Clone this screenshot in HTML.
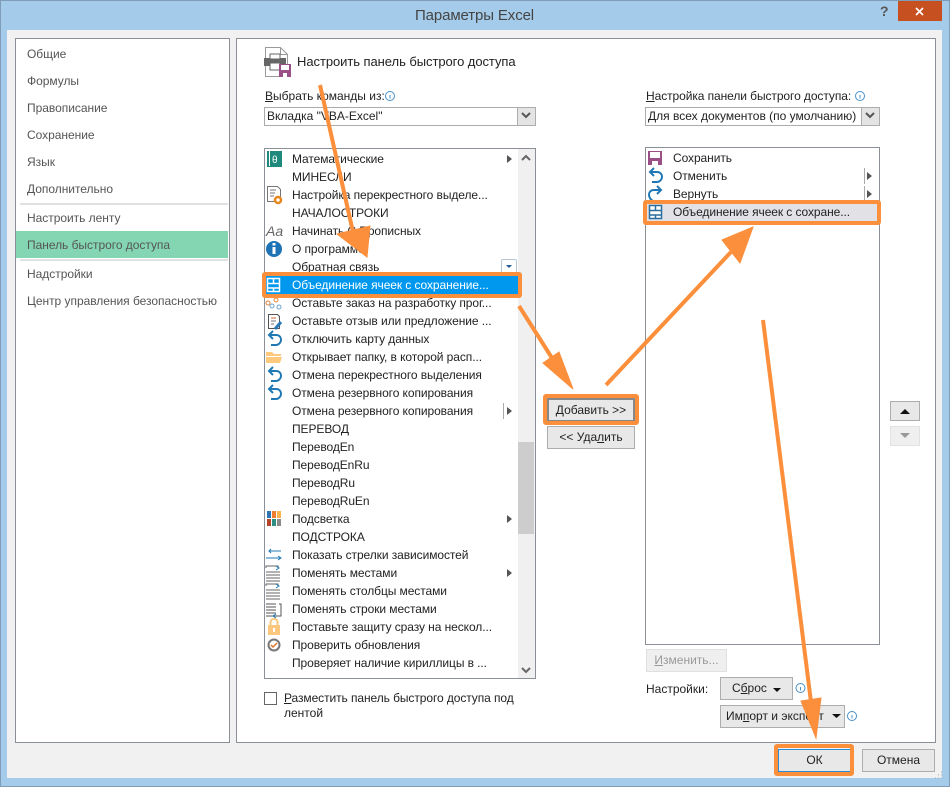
<!DOCTYPE html>
<html lang="ru"><head><meta charset="utf-8"><title>Параметры Excel</title>
<style>
html,body{margin:0;padding:0;background:#a5cbea}
#w{position:relative;width:950px;height:787px;overflow:hidden;background:#a5cbea;font:12px/18px "Liberation Sans",sans-serif;color:#222}
#w div{position:absolute;box-sizing:border-box}
.t{white-space:nowrap;height:18px}
.n{left:27px;color:#555;white-space:nowrap;height:18px;letter-spacing:-.03px}
.sep{left:20px;width:208px;height:2px;background:#e1e1e1}
.i{left:292px;letter-spacing:-.08px}
.r{left:673px;letter-spacing:-.08px}
.b{background:#e8e8e8;border:1px solid #adadad;text-align:center;white-space:nowrap}
.c{background:#fff;border:1px solid #ababab}
.d{background:#e4e4e4;border:1px solid #adadad}
u{text-underline-offset:1px}
svg{position:absolute;left:0;top:0}
</style></head><body><div id="w">
<div style="left:0;top:0;width:950px;height:787px;border:1px solid #7f9db9"></div>
<div style="left:7px;top:30px;width:935px;height:748px;background:#f1f1f1"></div>
<div style="left:15px;top:38px;width:215px;height:705px;background:#fff;border:1px solid #8b9097"></div>
<div style="left:236px;top:38px;width:700px;height:705px;background:#fff;border:1px solid #8b9097"></div>
<div class="t" style="left:415px;top:7px;font-size:15px;letter-spacing:-.12px;color:#444">Параметры Excel</div>
<div style="left:898px;top:1px;width:44px;height:20px;background:#c75020"></div>
<div class="t" style="left:880px;top:2px;font-size:14px;font-weight:bold;color:#555">?</div>

<div class="n" style="top:45px">Общие</div>
<div class="n" style="top:72px">Формулы</div>
<div class="n" style="top:99px">Правописание</div>
<div class="n" style="top:126px">Сохранение</div>
<div class="n" style="top:153px">Язык</div>
<div class="n" style="top:180px">Дополнительно</div>
<div class="sep" style="top:203px"></div>
<div class="n" style="top:209px">Настроить ленту</div>
<div style="left:16px;top:231px;width:212px;height:27px;background:#84d6b3"></div>
<div class="n" style="top:236px">Панель быстрого доступа</div>
<div class="sep" style="top:259px"></div>
<div class="n" style="top:265px">Надстройки</div>
<div class="n" style="top:292px">Центр управления безопасностью</div>

<div class="t" style="left:297px;top:53px;font-size:13px;letter-spacing:-.06px">Настроить панель быстрого доступа</div>
<div class="t" style="left:265px;top:87px"><u>В</u>ыбрать команды из:</div>
<div class="c" style="left:264px;top:107px;width:272px;height:19px"></div>
<div class="t" style="left:267px;top:107px">Вкладка "VBA-Excel"</div>
<div class="d" style="left:517px;top:107px;width:19px;height:19px"></div>

<div class="c" style="left:264px;top:148px;width:272px;height:531px;border-color:#8b9097"></div>
<div style="left:518px;top:149px;width:17px;height:529px;background:#f0f0f0"></div>
<div style="left:518px;top:442px;width:16px;height:92px;background:#cdcdcd"></div>
<div style="left:501px;top:259px;width:16px;height:16px;background:#fff;border:1px solid #b5c6d6;border-radius:2px"></div>
<div style="left:266px;top:276px;width:252px;height:18px;background:#0098ee"></div>

<div class="t i" style="top:150px">Математические</div>
<div class="t i" style="top:168px">МИНЕСЛИ</div>
<div class="t i" style="top:186px">Настройка перекрестного выделе...</div>
<div class="t i" style="top:204px">НАЧАЛОСТРОКИ</div>
<div class="t i" style="top:222px">Начинать С Прописных</div>
<div class="t i" style="top:240px">О программе</div>
<div class="t i" style="top:258px">Обратная связь</div>
<div class="t i" style="top:276px;color:#fff">Объединение ячеек с сохранение...</div>
<div class="t i" style="top:294px">Оставьте заказ на разработку прог...</div>
<div class="t i" style="top:312px">Оставьте отзыв или предложение ...</div>
<div class="t i" style="top:330px">Отключить карту данных</div>
<div class="t i" style="top:348px">Открывает папку, в которой расп...</div>
<div class="t i" style="top:366px">Отмена перекрестного выделения</div>
<div class="t i" style="top:384px">Отмена резервного копирования</div>
<div class="t i" style="top:402px">Отмена резервного копирования</div>
<div class="t i" style="top:420px">ПЕРЕВОД</div>
<div class="t i" style="top:438px">ПереводEn</div>
<div class="t i" style="top:456px">ПереводEnRu</div>
<div class="t i" style="top:474px">ПереводRu</div>
<div class="t i" style="top:492px">ПереводRuEn</div>
<div class="t i" style="top:510px">Подсветка</div>
<div class="t i" style="top:528px">ПОДСТРОКА</div>
<div class="t i" style="top:546px">Показать стрелки зависимостей</div>
<div class="t i" style="top:564px">Поменять местами</div>
<div class="t i" style="top:582px">Поменять столбцы местами</div>
<div class="t i" style="top:600px">Поменять строки местами</div>
<div class="t i" style="top:618px">Поставьте защиту сразу на нескол...</div>
<div class="t i" style="top:636px">Проверить обновления</div>
<div class="t i" style="top:654px">Проверяет наличие кириллицы в ...</div>
<div class="t" style="left:266px;top:222px;font-size:14px;font-style:italic;color:#666">Aa</div>

<div style="left:264px;top:692px;width:13px;height:13px;background:#fff;border:1px solid #666"></div>
<div class="t" style="left:284px;top:689px;letter-spacing:-.08px"><u>Р</u>азместить панель быстрого доступа под</div>
<div class="t" style="left:284px;top:704px">лентой</div>

<div class="b" style="left:547px;top:398px;width:88px;height:24px;border-color:#888;border-width:2px;line-height:20px"><u>Д</u>обавить &gt;&gt;</div>
<div class="b" style="left:547px;top:426px;width:88px;height:23px;line-height:21px">&lt;&lt; Уда<u>л</u>ить</div>

<div class="t" style="left:646px;top:87px;letter-spacing:-.08px"><u>Н</u>астройка панели быстрого доступа:</div>
<div class="c" style="left:645px;top:107px;width:235px;height:19px"></div>
<div class="t" style="left:648px;top:107px">Для всех документов (по умолчанию)</div>
<div class="d" style="left:861px;top:107px;width:19px;height:19px"></div>
<div class="c" style="left:645px;top:147px;width:235px;height:498px;border-color:#8b9097"></div>
<div class="t r" style="top:149px">Сохранить</div>
<div class="t r" style="top:167px">Отменить</div>
<div class="t r" style="top:185px">Вернуть</div>
<div style="left:647px;top:204px;width:231px;height:18px;background:#e1e1e6"></div>
<div class="t r" style="top:203px">Объединение ячеек с сохране...</div>
<div style="left:864px;top:168px;width:1px;height:16px;background:#aaa"></div>
<div style="left:864px;top:186px;width:1px;height:16px;background:#aaa"></div>
<div style="left:503px;top:403px;width:1px;height:16px;background:#aaa"></div>

<div class="b" style="left:890px;top:401px;width:30px;height:20px"></div>
<div style="left:890px;top:426px;width:30px;height:20px;background:#efefef;border:1px solid #e2e2e2"></div>

<div style="left:646px;top:649px;width:81px;height:23px;background:#efefef;border:1px solid #e0e0e0;color:#9a9a9a;text-align:center;line-height:21px"><u>И</u>зменить...</div>
<div class="t" style="left:646px;top:680px">Настройки:</div>
<div class="b" style="left:720px;top:677px;width:73px;height:23px;line-height:21px;text-align:left;padding-left:11px">С<u>б</u>рос</div>
<div class="b" style="left:720px;top:705px;width:125px;height:23px;line-height:21px;text-align:left;padding-left:5px">Им<u>п</u>орт и экспорт</div>
<div class="b" style="left:778px;top:749px;width:73px;height:23px;line-height:21px;border-color:#2a8dd4">ОК</div>
<div class="b" style="left:862px;top:749px;width:73px;height:23px;line-height:21px">Отмена</div>

<svg width="950" height="787" viewBox="0 0 950 787" fill="none">
<!-- close -->
<path d="M916 8l7 7M923 8l-7 7" stroke="#fff" stroke-width="1.6"/>
<!-- header icon -->
<path d="M265.500 47.500h15l7 7v22h-22z" fill="#fff" stroke="#9a9a9a"/>
<path d="M280.500 47.500v7h7" stroke="#9a9a9a"/>
<rect x="264" y="58" width="22" height="8" fill="#666"/>
<rect x="270" y="54" width="10" height="5" fill="#fff" stroke="#666"/>
<rect x="270" y="63" width="10" height="7" fill="#fff" stroke="#666"/>
<rect x="279" y="64" width="12" height="13" fill="#9b4f87"/>
<rect x="281" y="65" width="8" height="5" fill="#fff"/>
<rect x="283" y="73" width="4" height="4" fill="#fff"/>
<!-- combo chevrons -->
<path d="M522 113l4 4 4-4M866 113l4 4 4-4" stroke="#555" stroke-width="2"/>
<!-- info icons -->
<g stroke="#4a90c8" fill="#fff"><circle cx="390" cy="96" r="4.500"/><circle cx="860" cy="96" r="4.500"/><circle cx="800.500" cy="688" r="4.500"/><circle cx="852" cy="716" r="4.500"/></g>
<path d="M390 95v3.500M860 95v3.500M800.500 687v3.500M852 715v3.500" stroke="#4a90c8"/>
<!-- scrollbar arrows, list chevrons -->
<path d="M522 160l4-4 4 4M522 668l4 4 4-4" stroke="#666" stroke-width="2"/>
<path d="M507 155l5 4-5 4zM507 515l5 4-5 4zM507 569l5 4-5 4zM507 407l5 4-5 4zM867 172l5 4-5 4zM867 190l5 4-5 4z" fill="#555"/>
<path d="M506 265h6l-3 3z" fill="#1e5a94"/>
<!-- math -->
<rect x="267" y="151" width="15" height="16" fill="#1f8a7c"/><rect x="269" y="151" width="1" height="15" fill="#fff"/>
<text x="272" y="163" font-size="10" font-family="Liberation Sans" fill="#fff">θ</text>
<!-- settings doc -->
<path d="M267.500 186.500h10l3 3v12h-13z" fill="#fff" stroke="#777"/>
<path d="M270 190h6M270 193h5M270 196h4" stroke="#777"/>
<circle cx="278" cy="200" r="3" stroke="#e8861e" stroke-width="2.500" fill="#fff"/>
<!-- info big -->
<circle cx="274" cy="249" r="8" fill="#1e73b4"/><rect x="272.500" y="247" width="3" height="7" fill="#fff"/><rect x="272.500" y="243" width="3" height="2.500" fill="#fff"/>
<!-- merge white -->
<g stroke="#fff" stroke-width="1.500"><rect x="267.500" y="278.500" width="12" height="13"/><path d="M267 283.500h13M267 288h13M273.500 278v5M273.500 288v4"/></g>
<!-- network -->
<g stroke="#e0843a" fill="#fff"><circle cx="268" cy="303" r="2"/><circle cx="276" cy="300" r="2"/></g>
<g stroke="#6aa5d0" fill="#fff"><circle cx="272" cy="306" r="2"/><circle cx="279" cy="307" r="2"/></g>
<!-- feedback doc -->
<path d="M268.500 314.500h9l2 2v12h-11z" fill="#fff" stroke="#555"/>
<path d="M271 318h5" stroke="#d0602e"/><path d="M271 321h5M271 324h3" stroke="#777"/>
<path d="M275 329l6-7" stroke="#2a7ab8" stroke-width="3"/>
<!-- undo icons -->
<g stroke="#1f78b4" stroke-width="2" fill="none">
<path d="M270 335h6c4 0 5 3 5 5s-2 5-5 5h-5M273 331l-4 4 4 4"/>
<path d="M270 371h6c4 0 5 3 5 5s-2 5-5 5h-5M273 367l-4 4 4 4"/>
<path d="M270 389h6c4 0 5 3 5 5s-2 5-5 5h-5M273 385l-4 4 4 4"/>
<path d="M651 172h6c4 0 5 3 5 5s-2 5-5 5h-5M654 168l-4 4 4 4"/>
<path d="M660 190h-6c-4 0-5 3-5 5s2 6 5 6h5M657 186l4 4-4 4"/>
</g>
<!-- folder -->
<path d="M266 352h6l2 2h7v2h-15zM266 357h16l-2 6h-14z" fill="#fdc97c"/>
<!-- highlight palette -->
<rect x="267" y="511" width="4" height="7" fill="#2e75b6"/><rect x="272" y="511" width="4" height="7" fill="#ed7d31"/><rect x="277" y="511" width="4" height="7" fill="#fbb44c"/>
<rect x="267" y="519" width="4" height="7" fill="#b5452a"/><rect x="272" y="519" width="4" height="7" fill="#2f8f83"/><rect x="277" y="519" width="4" height="7" fill="#8a8a8a"/>
<!-- arrows deps -->
<path d="M269 551h12M271 549l-2 2 2 2M266 558h14M278 556l3 2-3 2" stroke="#1f78b4"/>
<!-- swap lines -->
<path d="M266 568v-2h12v2M266 572h14M266 575h14M266 578h14M266 581h14" stroke="#666"/>
<path d="M266 586v-2h12v2M266 590h14M266 593h14M266 596h14M266 599h14" stroke="#666"/>
<path d="M266 604h10M266 607h10M266 610h10M266 613h10M266 616h10M279 604h2v12h-5" stroke="#555"/>
<path d="M276 566l3 2-3 2M276 584l3 2-3 2M276 614l-3 2 3 2" stroke="#1f78b4"/>
<!-- lock -->
<rect x="268" y="625" width="12" height="10" fill="#fcc77f"/><path d="M270.500 625v-3c0-4 7-4 7 0v3" stroke="#fcc77f" stroke-width="2"/>
<rect x="273" y="628" width="2" height="4" fill="#fff"/>
<!-- check -->
<circle cx="274" cy="645" r="5.500" stroke="#777" stroke-width="2"/><path d="M271 645l2 2 4-4" stroke="#e0762a" stroke-width="1.500"/>
<!-- save -->
<rect x="648" y="151" width="14" height="14" fill="#9b4f87"/><rect x="650" y="152" width="10" height="6" fill="#fff"/><rect x="652" y="161" width="6" height="4" fill="#fff"/>
<!-- merge right -->
<g stroke="#2a6f9e" stroke-width="1.500"><rect x="649.500" y="205.500" width="12" height="13" fill="#fff"/><path d="M649 210.500h13M649 215h13M655.500 205v5M655.500 215v4"/></g>
<!-- button arrows -->
<path d="M900 414l5-5 5 5z" fill="#111"/><path d="M900 433h10l-5 5z" fill="#999"/>
<path d="M773 688h8l-4 4z" fill="#111"/><path d="M832 714h9l-4.500 4z" fill="#111"/>
<!-- grip -->
<path d="M941 772h1M938 775h1M941 775h1M935 778h1M938 778h1M941 778h1" stroke="#aaa"/>
<!-- orange boxes -->
<g stroke="#fb8f3c" stroke-width="4" fill="none">
<rect x="264" y="274" width="256" height="22" rx="1"/>
<rect x="645" y="202" width="234" height="21" rx="1"/>
<rect x="545" y="396" width="92" height="27" rx="1"/>
<rect x="776" y="746" width="76" height="28" rx="1"/>
</g>
<!-- arrows -->
<g fill="#fb8f3c" stroke="#fb8f3c">
<path d="M320 85L353 232" stroke-width="4"/><path d="M337 234L370 226L367 257z"/>
<path d="M519 306L552 358" stroke-width="4"/><path d="M543 363L559 352L573 389z"/>
<path d="M606 385L731 252" stroke-width="4"/><path d="M722 240L740 263L753 227z"/>
<path d="M763 320L811 702" stroke-width="4"/><path d="M801 701L821 698L816 738z"/>
</g>
</svg>
</div></body></html>
